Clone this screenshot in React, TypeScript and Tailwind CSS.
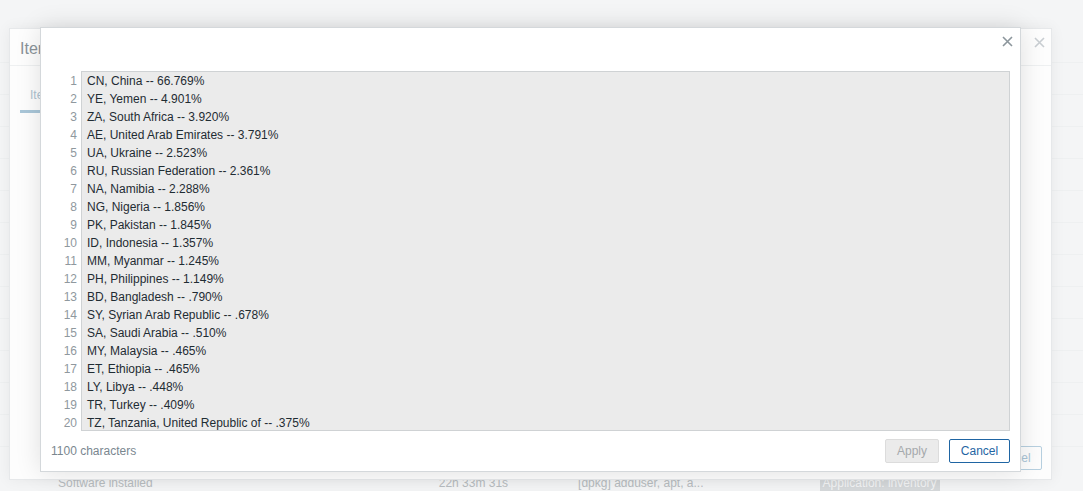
import React from "react";

const lines = [
  "CN, China -- 66.769%",
  "YE, Yemen -- 4.901%",
  "ZA, South Africa -- 3.920%",
  "AE, United Arab Emirates -- 3.791%",
  "UA, Ukraine -- 2.523%",
  "RU, Russian Federation -- 2.361%",
  "NA, Namibia -- 2.288%",
  "NG, Nigeria -- 1.856%",
  "PK, Pakistan -- 1.845%",
  "ID, Indonesia -- 1.357%",
  "MM, Myanmar -- 1.245%",
  "PH, Philippines -- 1.149%",
  "BD, Bangladesh -- .790%",
  "SY, Syrian Arab Republic -- .678%",
  "SA, Saudi Arabia -- .510%",
  "MY, Malaysia -- .465%",
  "ET, Ethiopia -- .465%",
  "LY, Libya -- .448%",
  "TR, Turkey -- .409%",
  "TZ, Tanzania, United Republic of -- .375%",
];

function CloseX({ className }: { className: string }) {
  return (
    <svg width="11" height="11" viewBox="0 0 11 11" className={className}>
      <path d="M1 1L10 10M10 1L1 10" stroke="currentColor" strokeWidth="1.6" />
    </svg>
  );
}

export default function App() {
  return (
    <div
      className="relative w-[1083px] h-[491px] overflow-hidden bg-[#f4f5f6] text-[12px] text-[#1f2c33]"
      style={{ fontFamily: '"Liberation Sans", Arial, sans-serif' }}
    >
      {/* page rows behind */}
      <div className="flex flex-col pt-[62px]">
        {Array.from({ length: 13 }).map((_, i) => (
          <div key={i} className="h-[32px] border-t border-[#eef0f1]" />
        ))}
      </div>
      <div className="absolute left-0 top-[474px] w-full h-[17px] flex items-center text-[#b8bdc1]">
        <span className="ml-[58px]">Software installed</span>
        <span className="ml-[286px]">22h 33m 31s</span>
        <span className="ml-[70px]">[dpkg] adduser, apt, a...</span>
        <span className="ml-[116px] px-[3px] bg-[#d6d9db] text-[#f4f5f6]">Application: inventory</span>
      </div>

      {/* back dialog */}
      <div className="absolute left-[9px] top-[28px] w-[1043px] h-[452px] bg-[#fdfdfd] border border-[#e6e8ea] shadow-[0_0_14px_rgba(0,0,0,0.06)]">
        <div className="h-[36px] flex items-center pl-[10px] pt-[4px] text-[16px] text-[#8a9399]">Item</div>
        <div className="border-t border-[#eef0f1]" />
        <div className="relative mt-[20px] ml-[10px] w-[60px]">
          <div className="pl-[10px] text-[#aec3d0]">Item</div>
          <div className="mt-[6px] h-[3px] w-[40px] bg-[#a9c6d8]" />
        </div>
        <div className="absolute right-[6px] top-[8px]">
          <CloseX className="text-[#c9ced2]" />
        </div>
        <div className="absolute right-[9px] bottom-[9px] w-[60px] h-[24px] border border-[#b7d0e0] rounded-[2px] flex items-center justify-center text-[#a9c4d6]">
          Cancel
        </div>
      </div>

      {/* front dialog */}
      <div className="absolute left-[40px] top-[27px] w-[981px] h-[445px] bg-white border border-[#d4d8db] shadow-[0_0_24px_rgba(0,0,0,0.12)] flex flex-col">
        <div className="h-[43px] flex justify-end items-start pt-[8px] pr-[7px]">
          <CloseX className="text-[#8c969c]" />
        </div>
        <div className="flex pr-[10px]">
          <div className="w-[40px] flex flex-col items-end pr-[4px] pt-[1px] text-[#8f989e]">
            {lines.map((_, i) => (
              <div key={i} className="h-[18px] leading-[18px]">{i + 1}</div>
            ))}
          </div>
          <div className="flex-1 h-[360px] overflow-hidden bg-[#ebebeb] border border-[#cfd2d4] pl-[5px]">
            {lines.map((l, i) => (
              <div key={i} className="h-[18px] leading-[18px] whitespace-pre">{l}</div>
            ))}
          </div>
        </div>
        <div className="flex items-center justify-between pl-[10px] pr-[10px] mt-[7px]">
          <span className="text-[#7a878f]">1100 characters</span>
          <div className="flex gap-[10px]">
            <button className="w-[54px] h-[24px] bg-[#ebebeb] border border-[#dcdcdc] rounded-[2px] text-[#a5a9ac]">
              Apply
            </button>
            <button className="w-[61px] h-[24px] bg-white border border-[#1f65a3] rounded-[2px] text-[#1f65a3]">
              Cancel
            </button>
          </div>
        </div>
      </div>
    </div>
  );
}
